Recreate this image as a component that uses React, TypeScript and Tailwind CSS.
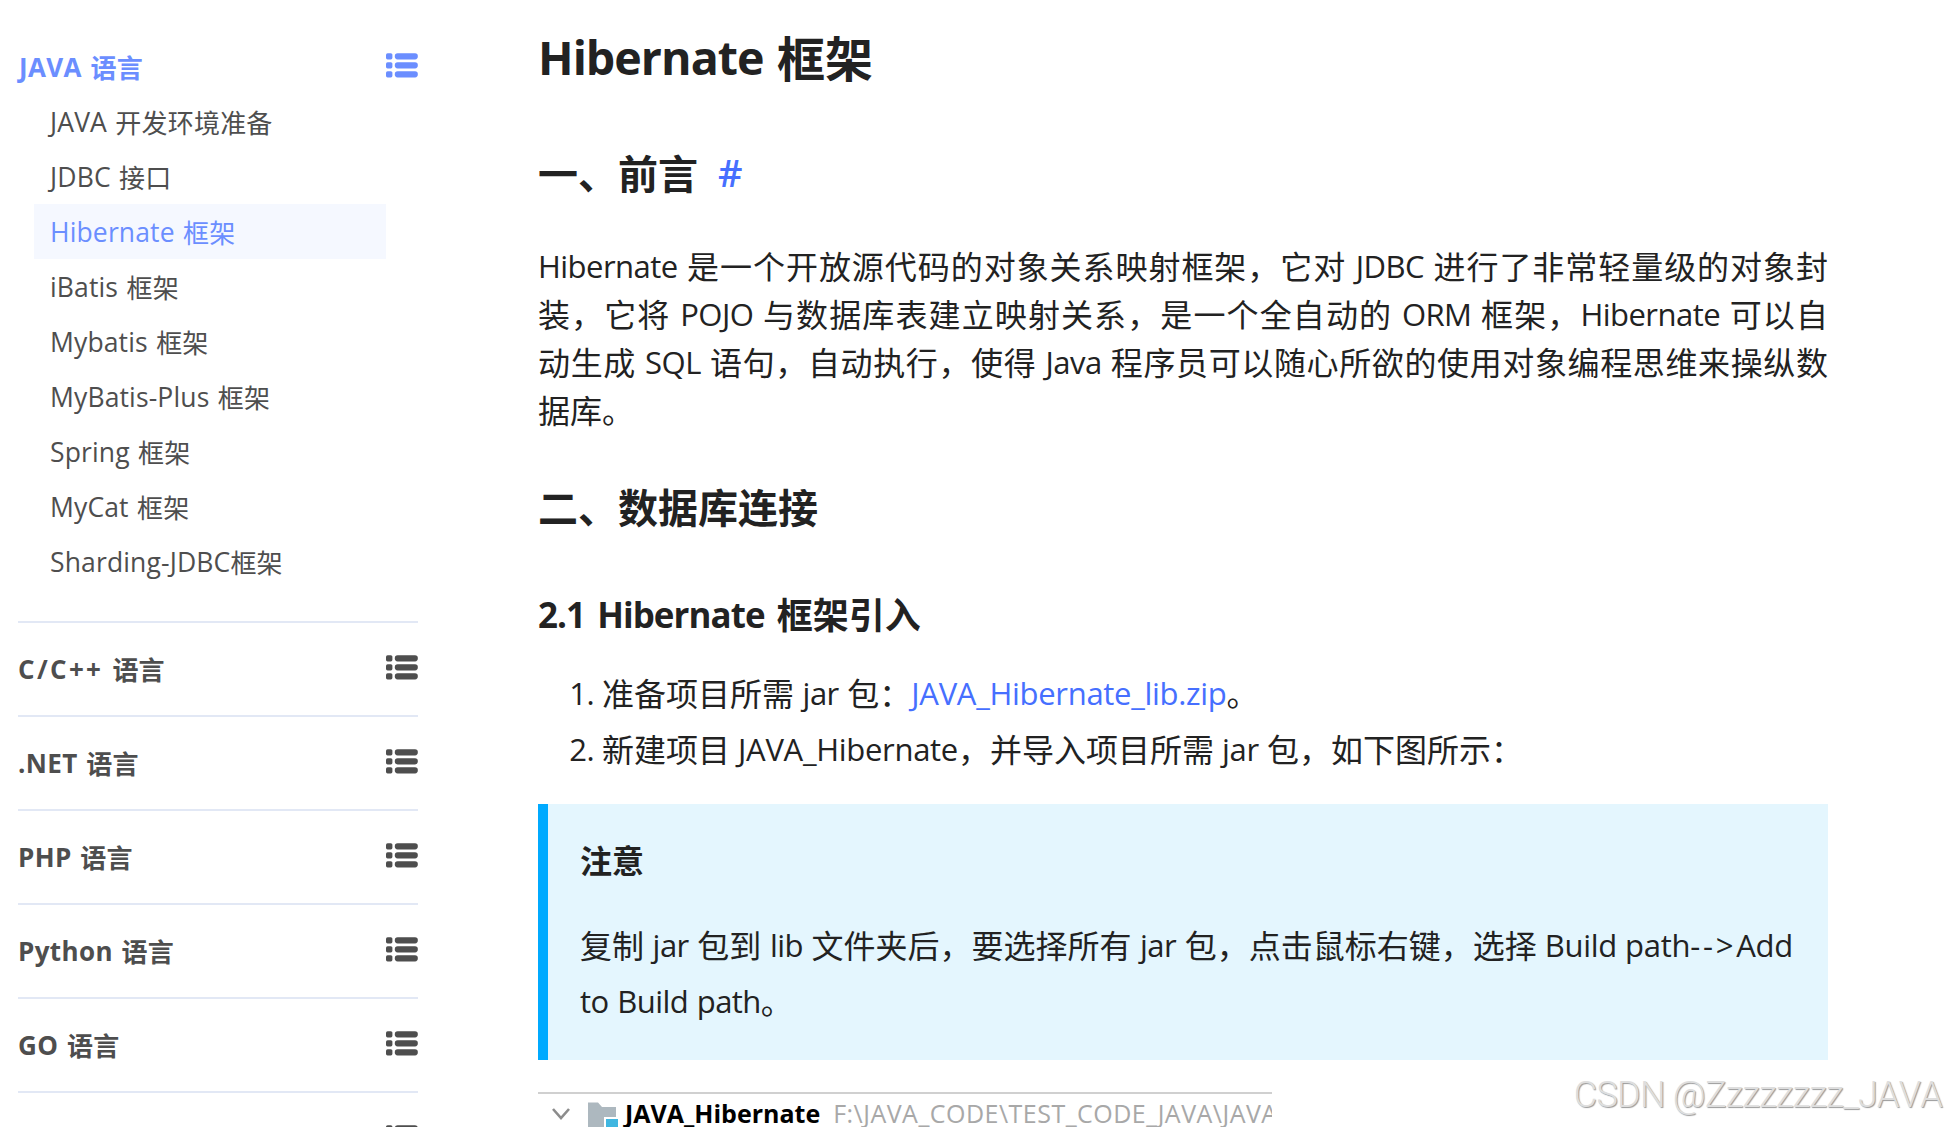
import React from "react";

const FONT = "font-['Open_Sans','Noto_Sans_CJK_SC',sans-serif]";

// Latin runs get their own size and tracking next to the Chinese text.
const LATIN = {
  body: "text-[0.97em] leading-none tracking-[-0.018em] [word-spacing:0.035em] align-[0.04em]",
  ident: "text-[0.97em] leading-none tracking-[-0.01em] [word-spacing:0.01em] align-[0.04em]",
  arrow: "text-[0.97em] leading-none tracking-[0.09em] align-[0.04em]",
  heading: "text-[0.97em] leading-none tracking-[-0.021em] [word-spacing:0.05em] align-[0.04em]",
  subheading: "text-[0.97em] leading-none tracking-[-0.026em] [word-spacing:0.11em] align-[0.04em]",
  nav: "text-[1.02em] leading-none tracking-[0.005em] [word-spacing:0.05em] align-[0.02em]",
  navBold: "text-[1em] leading-none tracking-[0.014em] [word-spacing:0.06em] align-[0.02em]",
  navPlus: "text-[1em] leading-none tracking-[0.09em] align-[0.02em]",
};

function Mixed({ text, kind = "body" }: { text: string; kind?: keyof typeof LATIN }) {
  const runs = text.split(/([\x20-\x7e]+)/).filter(Boolean);
  return (
    <>
      {runs.map((run, i) =>
        /^[\x20-\x7e]/.test(run) ? (
          <span key={i} className={LATIN[kind]}>
            {run}
          </span>
        ) : (
          <React.Fragment key={i}>{run}</React.Fragment>
        ),
      )}
    </>
  );
}

function ListIcon() {
  return (
    <svg viewBox="0 0 32 25" className="h-[25px] w-8 shrink-0" fill="currentColor">
      {[0, 9, 18].map((y) => (
        <g key={y}>
          <rect x="0" y={y + 0.2} width="6.4" height="6.2" rx="1.6" />
          <rect x="8.8" y={y + 0.2} width="23" height="6.2" rx="2.8" />
        </g>
      ))}
    </svg>
  );
}

const javaItems = [
  "JAVA 开发环境准备",
  "JDBC 接口",
  "Hibernate 框架",
  "iBatis 框架",
  "Mybatis 框架",
  "MyBatis-Plus 框架",
  "Spring 框架",
  "MyCat 框架",
  "Sharding-JDBC框架",
];

const groups = ["C/C++ 语言", ".NET 语言", "PHP 语言", "Python 语言", "GO 语言", ""];

const intro = [
  "Hibernate 是一个开放源代码的对象关系映射框架，它对 JDBC 进行了非常轻量级的对象封",
  "装，它将 POJO 与数据库表建立映射关系，是一个全自动的 ORM 框架，Hibernate 可以自",
  "动生成 SQL 语句，自动执行，使得 Java 程序员可以随心所欲的使用对象编程思维来操纵数",
];

function Sidebar() {
  return (
    <nav className="ml-[18px] w-[400px] shrink-0 text-[26px] tracking-[0.2px] text-[#4e4e4e]">
      <div className="flex h-[94px] items-start justify-between pt-[53px] text-[#6b8eff]">
        <span className="-mt-[3px] pl-[1px] font-bold leading-[36px]">
          <Mixed text="JAVA 语言" kind="navBold" />
        </span>
        <ListIcon />
      </div>
      <ul className="ml-4 w-[352px]">
        {javaItems.map((item) => (
          <li
            key={item}
            className={
              item.startsWith("Hibernate")
                ? "h-[55px] bg-[#f5f8ff] pl-4 leading-[58px] text-[#6b8eff]"
                : "h-[55px] pl-4 leading-[58px]"
            }
          >
            <Mixed text={item} kind="nav" />
          </li>
        ))}
      </ul>
      <div className="mt-[32px]">
        {groups.map((group) => (
          <div
            key={group}
            className="flex h-[94px] items-start justify-between border-t-2 border-[#e2e8f5] pt-[32px]"
          >
            <span className="-mt-[3px] font-bold leading-[36px]">
              <Mixed text={group} kind={group.startsWith("C/") ? "navPlus" : "navBold"} />
            </span>
            <ListIcon />
          </div>
        ))}
      </div>
    </nav>
  );
}

function ProjectTree() {
  return (
    <div className="mt-[32px] flex h-[35px] w-[734px] items-start overflow-hidden whitespace-nowrap border-t-2 border-[#d0d0d0] text-[25px] leading-[38px]">
      <svg viewBox="0 0 20 14" className="ml-[13px] mt-[13px] h-[14px] w-5 shrink-0" fill="none">
        <path d="M2 2 L10 11 L18 2" stroke="#8c8c8c" strokeWidth="2.6" />
      </svg>
      <svg viewBox="0 0 31 28" className="ml-[17px] mt-[7px] h-7 w-[31px] shrink-0">
        <path d="M0 1.5h10l4 4.5h14v22H0z" fill="#adb8bf" />
        <path d="M16 16h15v12H16z" fill="#fff" />
        <path d="M18 18h12v10H18z" fill="#40b6e0" />
      </svg>
      <span className="ml-[6px] font-bold text-black">JAVA_Hibernate</span>
      <span className="ml-[13px] tracking-[0.48px] text-[#a8a8a8]">F:\JAVA_CODE\TEST_CODE_JAVA\JAVA</span>
    </div>
  );
}

function Article() {
  return (
    <main className="ml-[120px] w-[1290px] shrink-0 text-[32px] text-[#222222]">
      <h1 className="mt-[27px] text-[48px] font-bold leading-[64px]">
        <Mixed text="Hibernate 框架" kind="heading" />
      </h1>
      <h2 className="mt-[55px] text-[40px] font-bold leading-[56px]">
        一、前言
        <a className="ml-[20px] align-[0.06em] text-[38px] font-semibold leading-none text-[#466fff]">#</a>
      </h2>
      <div className="mt-[41px] leading-[48px]">
        {intro.map((line) => (
          <p key={line} className="whitespace-nowrap text-justify [text-align-last:justify]">
            <Mixed text={line} />
          </p>
        ))}
        <p>据库。</p>
      </div>
      <h2 className="mt-[45px] text-[40px] font-bold leading-[56px]">二、数据库连接</h2>
      <h3 className="mt-[53px] text-[36px] font-bold leading-[54px]">
        <Mixed text="2.1 Hibernate 框架引入" kind="subheading" />
      </h3>
      <ol className="mt-[23px] leading-[56px]">
        <li className="flex">
          <span className="w-[64px] pr-[8px] text-right">
            <Mixed text="1." />
          </span>
          <span className="whitespace-nowrap">
            <Mixed text="准备项目所需 jar 包：" />
            <a className="text-[#466fff]">
              <Mixed text="JAVA_Hibernate_lib.zip" kind="ident" />
            </a>
            。
          </span>
        </li>
        <li className="flex">
          <span className="w-[64px] pr-[8px] text-right">
            <Mixed text="2." />
          </span>
          <span className="whitespace-nowrap">
            <Mixed text="新建项目 JAVA_Hibernate，并导入项目所需 jar 包，如下图所示：" kind="ident" />
          </span>
        </li>
      </ol>
      <section className="mt-[26px] h-[256px] border-l-[10px] border-[#00aaff] bg-[#e4f6fe] pl-8 pt-[29px] leading-[56px]">
        <p className="font-bold">注意</p>
        <p className="mt-[29px] whitespace-nowrap">
          <Mixed text="复制 jar 包到 lib 文件夹后，要选择所有 jar 包，点击鼠标右键，选择" />
          <Mixed text=" Build path" kind="ident" />
          <Mixed text="-->" kind="arrow" />
          <Mixed text="Add" kind="ident" />
          <br />
          <Mixed text="to Build path。" />
        </p>
      </section>
      <ProjectTree />
    </main>
  );
}

export default function App() {
  return (
    <div
      lang="zh-CN"
      className={`relative flex h-[1127px] w-[1945px] overflow-hidden bg-white [font-kerning:none] ${FONT}`}
    >
      <Sidebar />
      <Article />
      <div className="absolute right-[3px] top-[1071px] whitespace-nowrap font-['Roboto'] text-[36px] font-light leading-[48px] tracking-[-0.75px] text-[#dedede] [text-shadow:1px_1px_1px_#999]">
        CSDN @Zzzzzzzz_JAVA
      </div>
    </div>
  );
}
